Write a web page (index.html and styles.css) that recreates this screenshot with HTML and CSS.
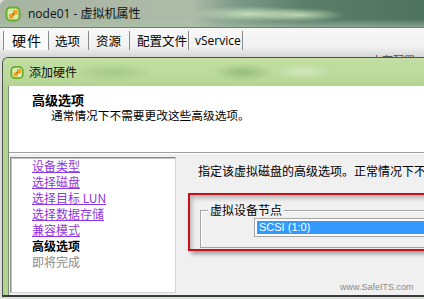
FILE: index.html
```html
<!DOCTYPE html>
<html lang="zh-CN">
<head>
<meta charset="utf-8">
<title>node01 - 虚拟机属性</title>
<link rel="stylesheet" href="styles.css">
</head>
<body>
<div class="win">
  <div class="win-title">
    <svg class="vm-icon" width="17" height="16" viewBox="0 0 17 16">
      <rect x="1.5" y="1.5" width="13" height="13" rx="4" fill="#d8ecb0" stroke="#6bac2c" stroke-width="2"/>
      <rect x="4" y="8" width="4.5" height="4.5" fill="#f0a11e"/>
      <rect x="8" y="4" width="4.5" height="4.5" fill="#f0a11e"/>
      <rect x="7" y="7" width="2.5" height="2.5" fill="#c07810"/>
    </svg>
    <span class="win-text">node01 - 虚拟机属性</span>
  </div>
  <div class="tabs">
    <div class="tab active">硬件</div>
    <div class="tab w40">选项</div>
    <div class="tab w41">资源</div>
    <div class="tab w59">配置文件</div>
    <div class="tab w54 latin">vService</div>
    <div class="peek">内存配置</div>
  </div>
</div>
<div class="dialog">
  <div class="dlg-title">
    <svg class="vm-icon" width="15" height="15" viewBox="0 0 17 16">
      <rect x="1.5" y="1.5" width="13" height="13" rx="4" fill="#d8ecb0" stroke="#6bac2c" stroke-width="2"/>
      <rect x="4" y="8" width="4.5" height="4.5" fill="#f0a11e"/>
      <rect x="8" y="4" width="4.5" height="4.5" fill="#f0a11e"/>
      <rect x="7" y="7" width="2.5" height="2.5" fill="#c07810"/>
    </svg>
    <span>添加硬件</span>
  </div>
  <div class="dlg-body">
    <div class="header">
      <div class="h-title">高级选项</div>
      <div class="h-sub">通常情况下不需要更改这些高级选项。</div>
    </div>
    <div class="main">
      <div class="steps">
        <a class="step link">设备类型</a>
        <a class="step link">选择磁盘</a>
        <a class="step link">选择目标 LUN</a>
        <a class="step link">选择数据存储</a>
        <a class="step link">兼容模式</a>
        <div class="step current">高级选项</div>
        <div class="step pending">即将完成</div>
      </div>
      <div class="content">
        <div class="intro">指定该虚拟磁盘的高级选项。正常情况下不需要更改这些设置。</div>
        <div class="highlight">
          <div class="group">
            <span class="legend">虚拟设备节点</span>
            <div class="combo"><div class="combo-sel">SCSI (1:0)</div></div>
          </div>
        </div>
        <div class="watermark">www.SafeITS.com</div>
      </div>
    </div>
  </div>
</div>
</body>
</html>
```
FILE: styles.css
```css
* { box-sizing: border-box; }
html, body { margin: 0; padding: 0; }
body {
  width: 424px;
  height: 299px;
  overflow: hidden;
  background: #dcdedc;
  font-family: "Noto Sans CJK SC", sans-serif;
  font-size: 12px;
  color: #000;
}

.win-title {
  height: 28px;
  display: flex;
  align-items: center;
  gap: 6px;
  padding-left: 5px;
  border-radius: 6px 0 0 0;
  border-bottom: 1px solid #6f7d70;
  background:
    radial-gradient(ellipse 60px 8px at 250px 14px, rgba(205,230,190,0.9), rgba(205,230,190,0) 100%),
    radial-gradient(ellipse 45px 7px at 300px 15px, rgba(200,228,185,0.85), rgba(200,228,185,0) 100%),
    linear-gradient(to bottom, rgba(255,255,255,0) 70%, rgba(170,195,170,0.6) 100%),
    linear-gradient(to right, #a7b4a1 0%, #aebba8 45%, #7f9b89 55%, #5b7e6b 72%, #4e7260 100%);
}
.win-text {
  font-family: "Open Sans", "Noto Sans CJK SC", sans-serif;
  font-size: 12px;
  line-height: 16px;
  color: #111;
}
.vm-icon { display: block; flex: none; }

.tabs {
  height: 29px;
  display: flex;
  align-items: flex-start;
  padding: 3px 0 0 3px;
  background: linear-gradient(to bottom, #f8f8f8 0%, #f1f1f1 65%, #d6d6d6 100%);
}
.tab {
  height: 19px;
  line-height: 19px;
  padding-left: 6px;
  border-right: 1px solid #8a8a8a;
  font-size: 12.5px;
  white-space: nowrap;
  color: #000;
}
.tab.active {
  width: 46px;
  padding-left: 8px;
  border-left: 1px solid #8a8a8a;
  font-size: 14px;
  letter-spacing: 1px;
  background: #fbfbfb;
}
.w40 { width: 40px; }
.w41 { width: 41px; padding-left: 7px; }
.w59 { width: 59px; padding-left: 7px; }
.w54 { width: 54px; padding-left: 6px; }
.latin { font-family: "Open Sans", sans-serif; font-size: 12px; }
.peek {
  margin-left: auto;
  margin-right: 9px;
  align-self: flex-end;
  height: 4px;
  overflow: hidden;
  font-size: 11px;
  line-height: 14px;
  color: #444;
}

.dialog {
  margin-left: 2px;
  width: 470px;
  height: 240px;
  border-top: 1px solid #4b544a;
  border-left: 1px solid #4b544a;
  border-bottom: 2px solid #3a3a3a;
  border-radius: 6px 0 0 0;
  background: #b4d494;
  display: flex;
  flex-direction: column;
  overflow: hidden;
}
.dlg-title {
  height: 28px;
  flex: none;
  display: flex;
  align-items: center;
  gap: 4px;
  padding-left: 7px;
  font-size: 12px;
  line-height: 16px;
  color: #111;
  background:
    radial-gradient(ellipse 30px 9px at 240px 14px, rgba(140,180,115,0.8), rgba(140,180,115,0) 100%),
    radial-gradient(ellipse 30px 8px at 300px 14px, rgba(215,235,195,0.8), rgba(215,235,195,0) 100%),
    radial-gradient(ellipse 40px 9px at 110px 14px, rgba(150,185,125,0.55), rgba(150,185,125,0) 100%),
    linear-gradient(to bottom, #c2dea4 0%, #bcdb9c 50%, #b4d494 100%);
}
.dlg-body {
  flex: 1;
  margin-left: 5px;
  border-left: 1px solid #7c8b74;
  display: flex;
  flex-direction: column;
  background: #f0f0f0;
}
.header {
  height: 67px;
  flex: none;
  background: #fff;
  padding: 7px 0 0 23px;
  border-bottom: 1px solid #a0a0a0;
  box-shadow: 0 1px 0 #fff;
}
.h-title {
  font-size: 13px;
  font-weight: bold;
  line-height: 14px;
}
.h-sub {
  margin-left: 19px;
  font-size: 11.7px;
  line-height: 16px;
}
.main {
  flex: 1;
  display: flex;
  padding: 4px 0 0 1px;
}
.steps {
  width: 166px;
  height: 136px;
  flex: none;
  background: #fff;
  border: 1px solid;
  border-color: #8a8a8a #d2d2d2 #d2d2d2 #8a8a8a;
  box-shadow: inset 1px 1px 0 #c4c4c4;
  padding: 0 0 0 21px;
  display: flex;
  flex-direction: column;
}
.step {
  line-height: 16px;
  font-size: 12px;
  white-space: nowrap;
}
.link { color: #9038e0; text-decoration: underline; }
.current { font-weight: bold; color: #000; }
.pending { color: #8a8a8a; }

.content {
  flex: 1;
  position: relative;
  padding: 6px 0 0 12px;
}
.intro {
  margin-left: 10px;
  line-height: 16px;
  white-space: nowrap;
}
.highlight {
  margin-top: 14px;
  width: 290px;
  height: 58px;
  border: 2px solid #c81018;
  padding: 15px 0 0 10px;
  box-shadow: 3px 3px 4px rgba(0,0,0,0.35), inset 2px 3px 5px rgba(0,0,0,0.25);
}
.group {
  position: relative;
  height: 38px;
  border: 1px solid #a3a3a3;
  border-right: none;
  box-shadow: inset 1px 1px 0 #fff;
  padding: 7px 0 0 53px;
}
.legend {
  position: absolute;
  top: -9px;
  left: 7px;
  padding: 0 2px;
  background: #f0f0f0;
  line-height: 16px;
  font-size: 12px;
}
.combo {
  height: 19px;
  border: 1px solid #a5a5a5;
  border-right: none;
  background: #fff;
  padding: 2px 0 2px 2px;
}
.combo-sel {
  height: 13px;
  background: #3399ff;
  color: #fff;
  font-family: "Liberation Sans", Arial, sans-serif;
  font-size: 11px;
  line-height: 13px;
  padding-left: 2px;
}
.watermark {
  position: absolute;
  left: 164px;
  top: 125px;
  font-family: "Liberation Sans", Arial, sans-serif;
  font-size: 9px;
  line-height: 11px;
  color: #8a8a8a;
}
```
